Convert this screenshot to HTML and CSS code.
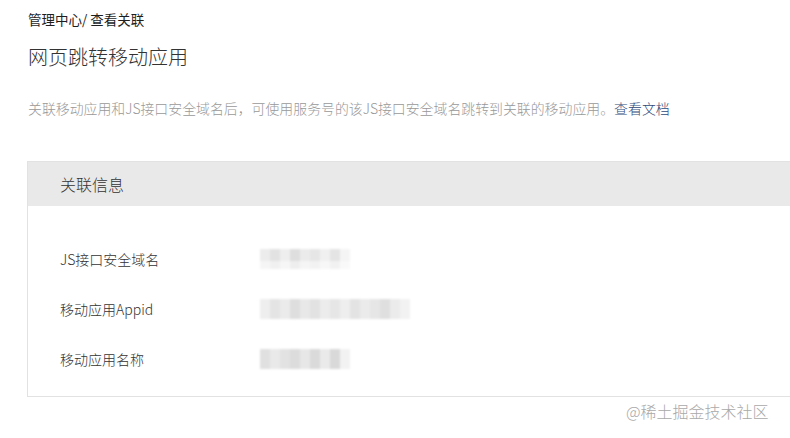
FILE: index.html
```html
<!DOCTYPE html>
<html lang="zh-CN">
<head>
<meta charset="utf-8">
<title>网页跳转移动应用</title>
<link rel="stylesheet" href="styles.css">
</head>
<body>
<div class="page">
  <div class="crumb">管理中心/ 查看关联</div>
  <h1 class="title">网页跳转移动应用</h1>
  <p class="desc">关联移动应用和JS接口安全域名后，可使用服务号的该JS接口安全域名跳转到关联的移动应用。<a class="link" href="#">查看文档</a></p>
  <section class="card">
    <div class="card-head">关联信息</div>
    <div class="card-body">
      <div class="row"><span class="label">JS接口安全域名</span><span class="mask mask-a"></span></div>
      <div class="row"><span class="label">移动应用Appid</span><span class="mask mask-b"></span></div>
      <div class="row"><span class="label">移动应用名称</span><span class="mask mask-c"></span></div>
    </div>
  </section>
</div>
<div class="watermark">@稀土掘金技术社区</div>
</body>
</html>
```
FILE: styles.css
```css
html, body {
  margin: 0;
  padding: 0;
  background: #fff;
  overflow: hidden;
}
body {
  font-family: "Noto Sans CJK SC", "Microsoft YaHei", "Noto Sans", sans-serif;
  font-weight: 300;
  color: #353535;
  width: 790px;
  height: 438px;
  position: relative;
}
.page {
  padding: 9px 0 0 27px;
}
.crumb {
  font-size: 13.5px;
  line-height: 20px;
  color: #1e1e1e;
  font-weight: 400;
  padding-left: 1px;
}
.title {
  margin: 14px 0 0 1px;
  font-size: 20px;
  line-height: 28px;
  font-weight: 300;
  color: #333;
}
.desc {
  margin: 27px 0 0 1px;
  font-size: 13.9px;
  line-height: 20px;
  color: #999;
  white-space: nowrap;
}
.link {
  color: #2f4a7a;
  font-weight: 300;
  text-decoration: none;
}
.card {
  margin-top: 43px;
  margin-right: -30px;
  border: 1px solid #e2e2e2;
}
.card-head {
  height: 44px;
  line-height: 44px;
  background: #e9e9e9;
  padding-left: 32px;
  font-size: 16px;
  color: #333;
}
.card-body {
  padding: 43px 0 27px 32px;
  display: flex;
  flex-direction: column;
  gap: 30px;
}
.row {
  display: flex;
  align-items: center;
  height: 20px;
}
.label {
  width: 200px;
  font-size: 14px;
  line-height: 20px;
  color: #333;
}
.mask {
  height: 20px;
  filter: blur(0.8px);
}
.mask-a {
  width: 90px;
  background:
    linear-gradient(180deg, rgba(255,255,255,0) 0 60%, rgba(255,255,255,0.5) 60% 100%),
    linear-gradient(90deg, #ececec 0 10px, #e2e2e2 10px 20px, #eeeeee 20px 30px, #dedede 30px 40px, #ebebeb 40px 50px, #e6e6e6 50px 60px, #f0f0f0 60px 70px, #e4e4e4 70px 80px, #f4f4f4 80px 90px);
}
.mask-b {
  width: 150px;
  background:
    linear-gradient(90deg, #eeeeee 0 10px, #e4e4e4 10px 20px, #ebebeb 20px 30px, #dedede 30px 40px, #e8e8e8 40px 50px, #e2e2e2 50px 60px, #ececec 60px 70px, #e6e6e6 70px 80px, #eeeeee 80px 90px, #e3e3e3 90px 100px, #ebebeb 100px 110px, #e6e6e6 110px 120px, #dfdfdf 120px 130px, #ebebeb 130px 140px, #f2f2f2 140px 150px);
}
.mask-c {
  width: 90px;
  background:
    linear-gradient(90deg, #e0e0e0 0 10px, #e9e9e9 10px 20px, #e2e2e2 20px 30px, #dcdcdc 30px 40px, #e7e7e7 40px 50px, #dadada 50px 60px, #eaeaea 60px 70px, #d9d9d9 70px 80px, #f2f2f2 80px 90px);
}
.watermark {
  position: absolute;
  left: 626px;
  top: 400px;
  font-size: 16px;
  line-height: 22px;
  color: #a9a9a9;
}
```
